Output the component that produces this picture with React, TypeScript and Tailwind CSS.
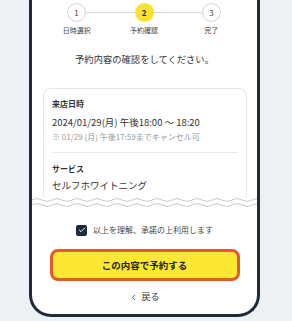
import { Check, ChevronLeft } from "lucide-react";

const font = { fontFamily: '"Noto Sans CJK JP", "Noto Sans", sans-serif' };

function Wave({ className }: { className?: string }) {
  // repeating sine-ish path, period 20px
  let d = "M0 3";
  for (let x = 0; x < 240; x += 20) {
    d += ` Q${x + 5} 0 ${x + 10} 3 Q${x + 15} 6 ${x + 20} 3`;
  }
  return (
    <svg width="225" height="6" viewBox="0 0 225 6" className={className}>
      <path d={d} fill="none" stroke="#c9c9c9" strokeWidth="1" />
    </svg>
  );
}

function Step({ n, active }: { n: number; active?: boolean }) {
  return (
    <div
      className={
        active
          ? "w-[19px] h-[19px] rounded-full bg-[#fbe232] flex items-center justify-center text-[8px] font-bold text-[#222]"
          : "w-[19px] h-[19px] rounded-full bg-white border border-[#d4d4d4] flex items-center justify-center text-[8px] text-[#444]"
      }
    >
      {n}
    </div>
  );
}

export default function App() {
  return (
    <div className="w-[292px] h-[321px] bg-[#eef1f4] overflow-hidden" style={font}>
      <div className="ml-[29px] w-[231px] h-[317px] bg-white border-[3px] border-t-0 border-[#1d2b3a] rounded-b-[22px] flex flex-col">
        {/* steps */}
        <div className="pt-[3px]">
          <div className="flex items-center w-[154px] ml-[35px]">
            <Step n={1} />
            <div className="flex-1 h-px bg-[#d9d9d9]" />
            <Step n={2} active />
            <div className="flex-1 h-px bg-[#d9d9d9]" />
            <Step n={3} />
          </div>
          <div className="grid grid-cols-3 w-[202px] ml-[11px] mt-[3px] text-[7px] leading-[10px] text-[#444] text-center">
            <span>日時選択</span>
            <span>予約確認</span>
            <span>完了</span>
          </div>
        </div>

        <p className="mt-[17px] text-center text-[9.3px] leading-[14px] text-[#333]">
          予約内容の確認をしてください。
        </p>

        {/* card */}
        <div className="mt-[22px]">
          <div className="mr-[10px] ml-[11px] border border-b-0 border-[#e6e6e6] rounded-t-[8px] px-[8px] pt-[9px] pb-[7px] text-[#333]">
            <p className="text-[8px] leading-[12px] font-bold">来店日時</p>
            <p className="mt-[5px] text-[9.5px] leading-[14px]">2024/01/29(月) 午後18:00 〜 18:20</p>
            <p className="mt-[2px] text-[8px] leading-[12px] text-[#9a9a9a]">※ 01/29 (月) 午後17:59までキャンセル可</p>
            <div className="mt-[9px] h-px bg-[#e8e8e8]" />
            <p className="mt-[10px] text-[8px] leading-[12px] font-bold">サービス</p>
            <p className="mt-[3px] text-[9.5px] leading-[14px]">セルフホワイトニング</p>
          </div>
          <div className="-mt-[2px] flex flex-col">
            <Wave className="bg-white" />
            <Wave className="-mt-px" />
          </div>
        </div>

        {/* agree */}
        <div className="mt-[16px] flex items-center justify-center gap-[6px] text-[8px] leading-[12px] text-[#444]">
          <span className="w-[11px] h-[11px] rounded-[2px] bg-[#1d2b3a] flex items-center justify-center">
            <Check className="w-[8px] h-[8px] text-white" strokeWidth={3} />
          </span>
          <span>以上を理解、承諾の上利用します</span>
        </div>

        {/* button */}
        <button className="mt-[13px] mx-auto w-[190px] h-[32px] rounded-[8px] bg-[#fde735] border-[3px] border-[#e35b28] text-[9.5px] font-bold text-[#222] flex items-center justify-center">
          この内容で予約する
        </button>

        <div className="mt-[10px] flex items-center justify-center gap-[3px] text-[9px] leading-[12px] text-[#333]">
          <ChevronLeft className="w-[9px] h-[9px]" strokeWidth={2} />
          <span>戻る</span>
        </div>
      </div>
    </div>
  );
}
